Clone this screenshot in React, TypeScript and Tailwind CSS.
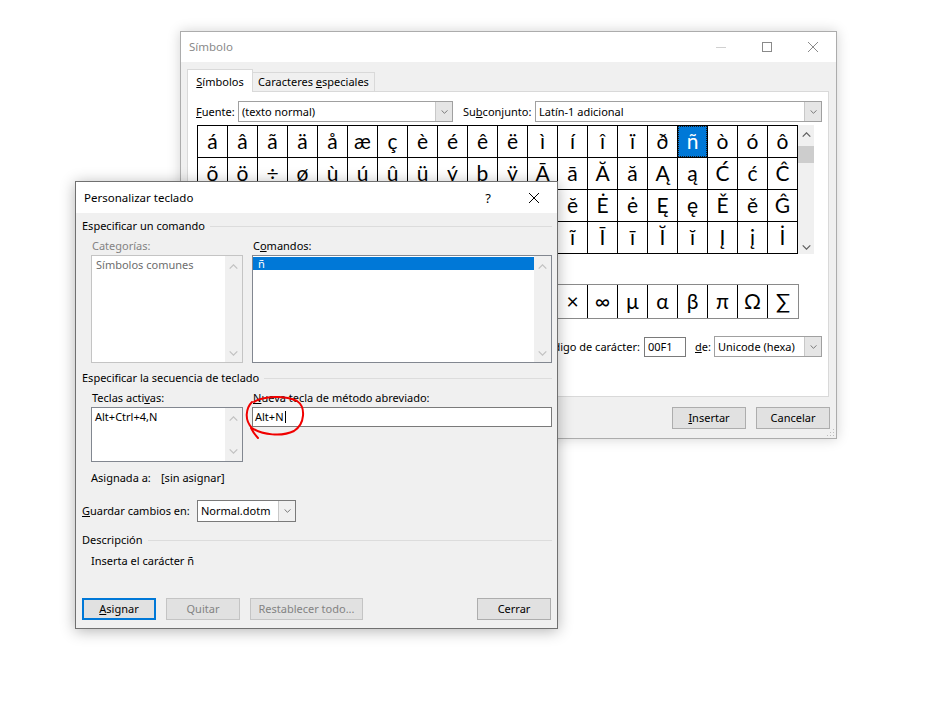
import React from "react";

const gridRows = [
  "áâãäåæçèéêëìíîïðñòóô",
  "õö÷øùúûüýþÿĀāĂăĄąĆćĈ",
  "ĉĊċČčĎďĐđĒēĔĕĖėĘęĚěĜ",
  "ĝĞğĠġĢģĤĥĦħĨĩĪīĬĭĮįİ",
];
const recent = "ñ€£¥©®™±≠≤≥÷×∞µαβπΩ∑";

function Chev({ up, color, className }: { up?: boolean; color: string; className?: string }) {
  return (
    <svg className={className ?? "h-[5px] w-[9px]"} viewBox="0 0 9 5" fill="none">
      <path
        d={up ? "M0.7 4.6L4.5 0.8L8.3 4.6" : "M0.7 0.4L4.5 4.2L8.3 0.4"}
        stroke={color}
        strokeWidth="1.2"
      />
    </svg>
  );
}

function XIcon({ color }: { color: string }) {
  return (
    <svg width="10" height="10" viewBox="0 0 10 10">
      <path d="M0 0L10 10M10 0L0 10" stroke={color} strokeWidth="1" />
    </svg>
  );
}

function Combo({ className, text }: { className: string; text: string }) {
  return (
    <div className={`${className} flex h-[21px] border border-[#a0a0a0] bg-white`}>
      <div className="flex min-w-0 flex-1 items-center pl-[3px]">{text}</div>
      <div className="flex w-[17px] items-center justify-center border-l border-[#c8c8c8] bg-[#e5e5e5]">
        <Chev color="#707070" className="h-[4px] w-[7px]" />
      </div>
    </div>
  );
}

function Btn({
  className,
  children,
  kind,
}: {
  className: string;
  children: React.ReactNode;
  kind?: "focus" | "disabled";
}) {
  const look =
    kind === "focus"
      ? "border-2 border-[#0078d7] text-black"
      : kind === "disabled"
        ? "border border-[#c4c4c4] text-[#838383]"
        : "border border-[#adadad] text-black";
  return (
    <div className={`${className} ${look} flex h-[22px] items-center justify-center bg-[#e1e1e1]`}>
      {children}
    </div>
  );
}

function ListScroll({ top, bottom }: { top: string; bottom: string }) {
  return (
    <div className={`flex w-[17px] flex-col items-center justify-between bg-[#f0f0f0] ${top} ${bottom}`}>
      <Chev up color="#c2c2c2" />
      <Chev color="#c2c2c2" />
    </div>
  );
}

function GroupHead({ text, gap }: { text: string; gap: string }) {
  return (
    <div className={`flex h-[16px] items-center ${gap}`}>
      <span>{text}</span>
      <div className="ml-[5px] h-px flex-1 bg-[#dcdcdc]" />
    </div>
  );
}

function SymbolDialog() {
  return (
    <div className="absolute left-[180px] top-[31px] flex h-[408px] w-[657px] flex-col border border-[#acacac] bg-[#f0f0f0] shadow-[0_0_12px_rgba(0,0,0,0.18)]">
      <div className="flex h-[30px] shrink-0 items-center bg-white">
        <span className="pl-[8px] text-[11.5px] text-[#8a8a8a]">Símbolo</span>
        <div className="ml-auto flex h-full">
          <div className="flex w-[46px] items-center justify-center">
            <div className="h-px w-[10px] bg-[#d0d0d0]" />
          </div>
          <div className="flex w-[46px] items-center justify-center">
            <div className="h-[10px] w-[10px] border border-[#8a8a8a]" />
          </div>
          <div className="flex w-[46px] items-center justify-center">
            <XIcon color="#8a8a8a" />
          </div>
        </div>
      </div>

      <div className="relative z-10 -mb-px flex h-[30px] shrink-0 items-end pl-[6px]">
        <div className="flex h-[23px] w-[66px] items-center justify-center border border-b-0 border-[#d9d9d9] bg-white pt-[2px]">
          <span>
            <span className="underline">S</span>ímbolos
          </span>
        </div>
        <div className="flex h-[20px] w-[122px] items-center justify-center border border-l-0 border-[#d9d9d9] bg-[#f0f0f0]">
          <span>
            Caracteres <span className="underline">e</span>speciales
          </span>
        </div>
      </div>

      <div className="ml-[6px] mr-[7px] flex h-[306px] shrink-0 flex-col border border-[#d9d9d9] bg-white pl-[8px]">
        <div className="mt-[9px] flex h-[21px] items-center">
          <span className="w-[42px]">
            <span className="underline">F</span>uente:
          </span>
          <Combo className="w-[215px]" text="(texto normal)" />
          <span className="ml-[10px] w-[72px]">
            Su<span className="underline">b</span>conjunto:
          </span>
          <Combo className="w-[287px]" text="Latín-1 adicional" />
        </div>

        <div className="ml-[1px] mt-[3px] flex">
          <div className="grid grid-cols-[repeat(20,30px)] border-l border-t border-black font-['Lato',sans-serif]">
            {gridRows.map((row, r) =>
              Array.from(row).map((ch, c) => {
                const sel = r === 0 && c === 16;
                return (
                  <div
                    key={`${r}-${c}`}
                    className={`relative flex h-[32px] items-center justify-center border-b border-r border-black text-[21px] leading-none ${sel ? "bg-[#0078d7] text-white" : "text-black"}`}
                  >
                    {sel && <div className="absolute inset-0 border border-dotted border-[#1a1a1a]" />}
                    <span className="pb-[2px]">{ch}</span>
                  </div>
                );
              }),
            )}
          </div>
          <div className="flex w-[16px] flex-col items-center bg-[#f0f0f0] pb-[4px] pt-[7px]">
            <Chev up color="#606060" />
            <div className="mt-[9px] h-[17px] w-full bg-[#cdcdcd]" />
            <div className="flex-1" />
            <Chev color="#606060" />
          </div>
        </div>

        <div className="ml-[1px] mt-[30px] flex h-[35px] w-[602px] border border-[#8a8a8a] font-['Lato',sans-serif]">
          {Array.from(recent).map((ch, i) => (
            <div
              key={i}
              className={`flex w-[30px] shrink-0 items-center justify-center text-[21px] leading-none ${i < 19 ? "border-r border-black" : ""}`}
            >
              <span className="pb-[2px]">{ch}</span>
            </div>
          ))}
        </div>

        <div className="mt-[17px] flex h-[21px] items-center justify-end pr-[6px]">
          <span className="mr-[4px]">Código de carácter:</span>
          <div className="flex h-[20px] w-[42px] items-center border border-[#7a7a7a] bg-white px-[3px]">00F1</div>
          <span className="ml-[9px] w-[19px]">
            <span className="underline">d</span>e:
          </span>
          <Combo className="w-[108px]" text="Unicode (hexa)" />
        </div>
      </div>

      <div className="mt-[10px] flex justify-end gap-[10px] pr-[6px]">
        <Btn className="w-[74px]">
          <span>
            <span className="underline">I</span>nsertar
          </span>
        </Btn>
        <Btn className="w-[74px]">Cancelar</Btn>
      </div>

      <svg className="absolute bottom-[1px] right-[1px]" width="8" height="8" viewBox="0 0 8 8">
        <rect x="6" y="0" width="1" height="1" fill="#bdbdbd" />
        <rect x="3" y="3" width="1" height="1" fill="#bdbdbd" />
        <rect x="6" y="3" width="1" height="1" fill="#bdbdbd" />
        <rect x="0" y="6" width="1" height="1" fill="#bdbdbd" />
        <rect x="3" y="6" width="1" height="1" fill="#bdbdbd" />
        <rect x="6" y="6" width="1" height="1" fill="#bdbdbd" />
      </svg>
    </div>
  );
}

function KeyboardDialog() {
  return (
    <div className="absolute left-[75px] top-[181px] flex h-[448px] w-[483px] flex-col border border-[#707070] bg-[#f0f0f0] shadow-[0_2px_14px_rgba(0,0,0,0.3)]">
      <div className="flex h-[31px] shrink-0 items-center bg-white">
        <span className="pl-[8px] text-[11.5px]">Personalizar teclado</span>
        <div className="ml-auto flex h-full">
          <div className="flex w-[46px] items-center justify-center text-[13px]">?</div>
          <div className="flex w-[46px] items-center justify-center">
            <XIcon color="#000000" />
          </div>
        </div>
      </div>

      <div className="flex flex-col pl-[6px] pr-[5px]">
        <GroupHead text="Especificar un comando" gap="mt-[5px]" />

        <div className="ml-[9px] mt-[4px] flex h-[16px] gap-[9px]">
          <span className="w-[152px] pl-px text-[#838383]">Categorías:</span>
          <span className="pl-px">
            C<span className="underline">o</span>mandos:
          </span>
        </div>
        <div className="ml-[9px] mt-px flex h-[108px] gap-[9px]">
          <div className="flex w-[152px] border border-[#c4c4c4] bg-white">
            <div className="flex-1 pl-[4px] pt-[1px] leading-[15px] text-[#6d6d6d]">Símbolos comunes</div>
            <ListScroll top="pt-[8px]" bottom="pb-[6px]" />
          </div>
          <div className="flex flex-1 border border-[#828790] bg-white">
            <div className="flex-1 pt-px">
              <div className="flex h-[13px] items-center bg-[#0078d7] pl-[5px] text-white">ñ</div>
            </div>
            <ListScroll top="pt-[8px]" bottom="pb-[6px]" />
          </div>
        </div>

        <GroupHead text="Especificar la secuencia de teclado" gap="mt-[7px]" />

        <div className="ml-[9px] mt-[4px] flex h-[16px] gap-[9px]">
          <span className="w-[152px] pl-px">
            Teclas acti<span className="underline">v</span>as:
          </span>
          <span className="pl-px">
            <span className="underline">N</span>ueva tecla de método abreviado:
          </span>
        </div>
        <div className="ml-[9px] mt-px flex h-[55px] items-start gap-[9px]">
          <div className="flex h-[55px] w-[152px] border border-[#828790] bg-white">
            <div className="flex-1 pl-[3px] pt-px">Alt+Ctrl+4,N</div>
            <ListScroll top="pt-[8px]" bottom="pb-[7px]" />
          </div>
          <div className="flex h-[20px] flex-1 items-center border border-[#7a7a7a] bg-white pl-[2px]">
            <span>Alt+N</span>
            <div className="ml-px h-[12px] w-px bg-black" />
          </div>
        </div>

        <div className="ml-[9px] mt-[8px] flex h-[16px]">
          <span className="w-[70px]">Asignada a:</span>
          <span>[sin asignar]</span>
        </div>

        <div className="mt-[14px] flex h-[22px] items-center">
          <span className="w-[115px]">
            <span className="underline">G</span>uardar cambios en:
          </span>
          <div className="flex h-[22px] w-[99px] border border-[#7a7a7a] bg-white">
            <div className="flex flex-1 items-center pl-[3px]">Normal.dotm</div>
            <div className="flex w-[17px] items-center justify-center border-l border-[#c8c8c8] bg-[#f0f0f0]">
              <Chev color="#707070" className="h-[4px] w-[7px]" />
            </div>
          </div>
        </div>

        <GroupHead text="Descripción" gap="mt-[10px]" />
        <div className="ml-[9px] mt-[5px] h-[16px]">Inserta el carácter ñ</div>

        <div className="mt-[29px] flex h-[22px] gap-[10px]">
          <Btn className="w-[74px]" kind="focus">
            <span>
              <span className="underline">A</span>signar
            </span>
          </Btn>
          <Btn className="w-[74px]" kind="disabled">
            Quitar
          </Btn>
          <Btn className="w-[113px]" kind="disabled">
            Restablecer todo...
          </Btn>
          <Btn className="ml-auto mr-px w-[74px]">Cerrar</Btn>
        </div>
      </div>
    </div>
  );
}

export default function App() {
  return (
    <div className="relative h-[718px] w-[939px] overflow-hidden bg-white font-['Noto_Sans',sans-serif] text-[11px] leading-[16px] text-black">
      <SymbolDialog />
      <KeyboardDialog />
      <svg className="pointer-events-none absolute left-0 top-0" width="939" height="718">
        <path
          d="M254 402C263 396 285 395 297 401C306 407 305 424 294 431C282 437 262 435 252 428C244 420 246 408 252 402M251 428C253 432 255 435 258 438"
          fill="none"
          stroke="#f00000"
          strokeWidth="2"
          strokeLinecap="round"
        />
      </svg>
    </div>
  );
}
